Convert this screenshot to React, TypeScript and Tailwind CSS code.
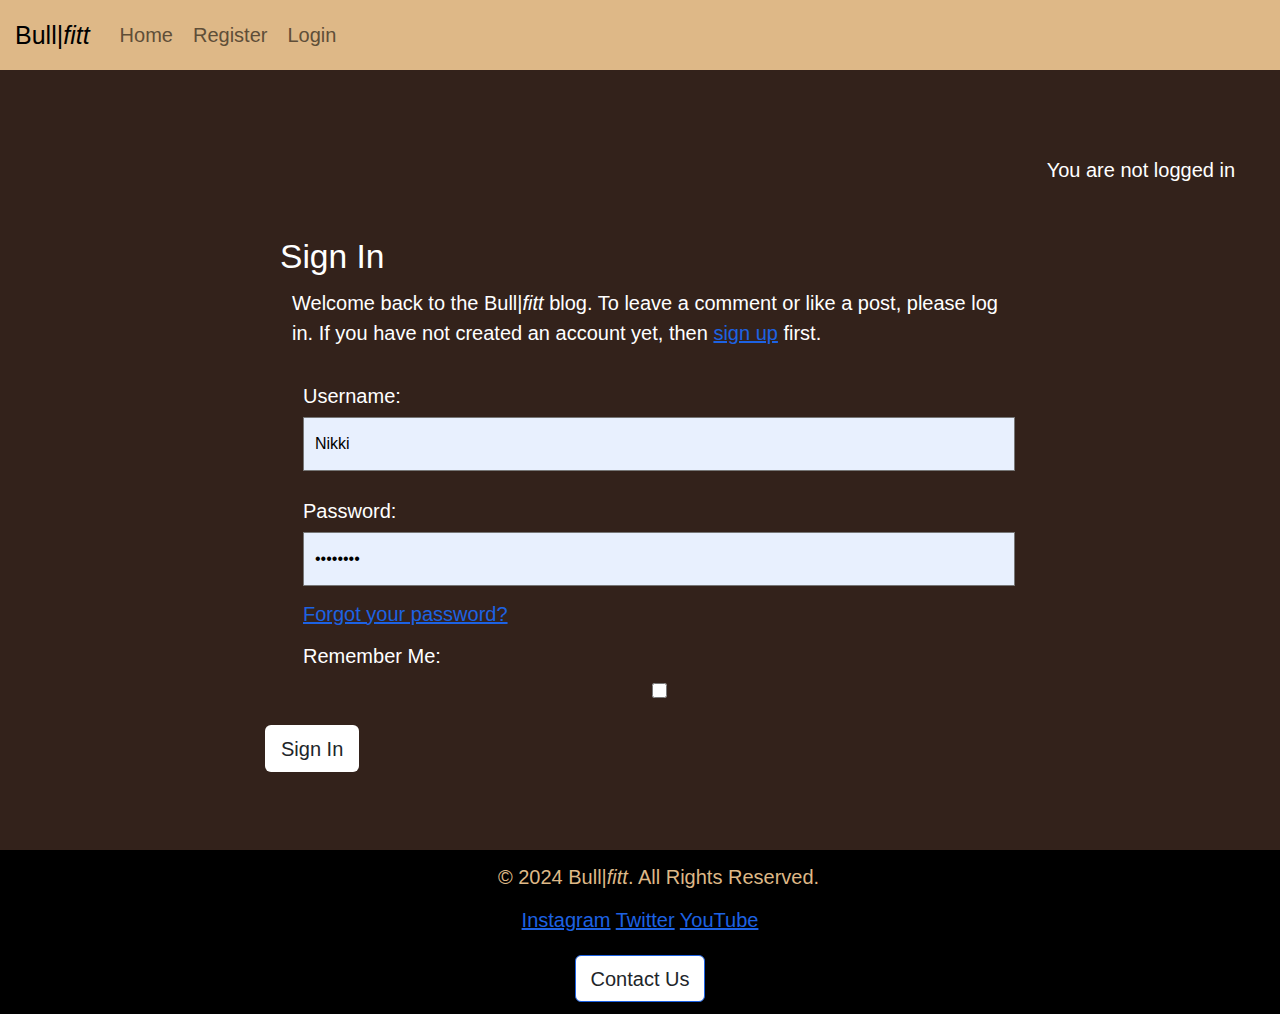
export default function App() {
  return (
    <div className="min-h-screen flex flex-col font-['Liberation_Sans',Arial,sans-serif]">
      <nav className="h-[70px] bg-[#deb887] flex items-center px-[15px] shrink-0">
        <a className="text-[25px] text-black leading-none mr-[30px]">
          Bull|<i>fitt</i>
        </a>
        <div className="flex gap-[20px] text-[20px] text-[#5f4e38]">
          <a>Home</a>
          <a>Register</a>
          <a>Login</a>
        </div>
      </nav>

      <main className="bg-[#33221b] text-white pt-[85px] pb-[78px]">
        <p className="text-right text-[20px] leading-[30px] pr-[45px]">You are not logged in</p>

        <div className="ml-[265px] w-[750px]">
          <h1 className="ml-[15px] mt-[52px] text-[33.6px] leading-[40px]">Sign In</h1>
          <p className="ml-[27px] mt-[11px] w-[723px] text-[20px] leading-[30px]">
            Welcome back to the Bull|<i>fitt</i> blog. To leave a comment or like a post, please log in. If you have not
            created an account yet, then{' '}
            <a className="text-[#1d62e3] underline">sign up</a> first.
          </p>

          <form className="ml-[38px] w-[712px] mt-[33px]">
            <label className="block text-[20px] leading-[30px]">Username:</label>
            <input
              type="text"
              readOnly
              defaultValue="Nikki"
              className="block mt-[6px] w-full h-[54px] bg-[#e8f0fe] border border-[#767676] px-[11px] text-[16px] text-black outline-none"
            />
            <label className="block mt-[25px] text-[20px] leading-[30px]">Password:</label>
            <input
              type="password"
              readOnly
              defaultValue="password"
              className="block mt-[6px] w-full h-[54px] bg-[#e8f0fe] border border-[#767676] px-[11px] text-[16px] text-black outline-none"
            />
            <a className="block mt-[13px] w-fit text-[20px] leading-[30px] text-[#1d62e3] underline">
              Forgot your password?
            </a>
            <label className="block mt-[12px] text-[20px] leading-[30px]">Remember Me:</label>
            <div className="flex justify-center mt-[12px]">
              <input type="checkbox" className="w-[15px] h-[15px] m-0" />
            </div>
          </form>

          <button className="mt-[27px] h-[47px] px-[16px] bg-white text-[#212529] text-[20px] rounded-[6px]">
            Sign In
          </button>
        </div>
      </main>

      <footer className="bg-black flex-1 flex flex-col items-center pt-[12px] pb-[12px] text-[20px] leading-[30px]">
        <p className="text-[#deb887] ml-[37px]">
          © 2024 Bull|<i>fitt</i>. All Rights Reserved.
        </p>
        <p className="mt-[13px]">
          <a className="text-[#1d62e3] underline">Instagram</a>{' '}
          <a className="text-[#1d62e3] underline">Twitter</a>{' '}
          <a className="text-[#1d62e3] underline">YouTube</a>
        </p>
        <button className="mt-[20px] h-[47px] px-[15px] bg-white text-[#212529] text-[20px] rounded-[6px] border border-[#1d62e3]">
          Contact Us
        </button>
      </footer>
    </div>
  );
}
